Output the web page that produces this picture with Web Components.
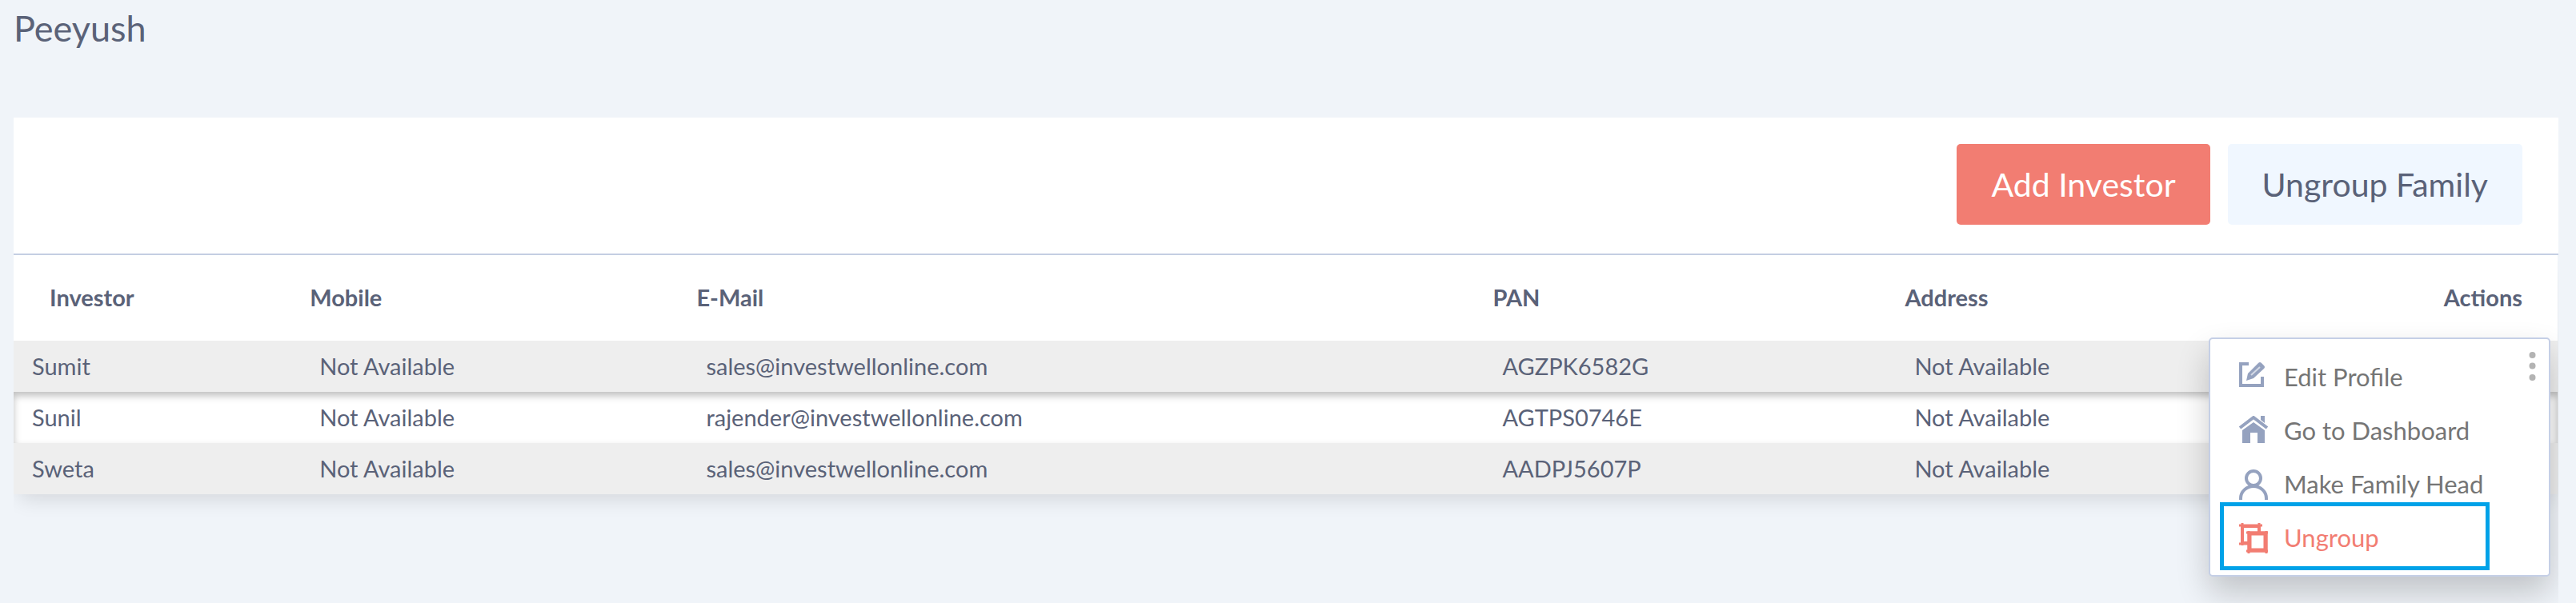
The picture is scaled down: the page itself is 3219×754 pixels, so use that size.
<!DOCTYPE html>
<html lang="en">
<head>
<meta charset="utf-8">
<meta name="viewport" content="width=device-width, initial-scale=1">
<title>Peeyush</title>
<style>
body {
  margin: 0;
  background-color: #f0f4f9;
  color: #5a6278;
  font-family: Lato, "Open Sans", sans-serif;
  font-size: 29px;
}
</style>
</head>
<body>
<family-page heading="Peeyush">
  <action-button slot="actions" kind="primary">Add Investor</action-button>
  <action-button slot="actions">Ungroup Family</action-button>
  <investor-table></investor-table>
</family-page>

<script>
//Page layout: heading, toolbar and the content card
let familyPage = document.createElement("template");

familyPage.innerHTML = `
<style>
:host {
  display: flex;
  flex-direction: column;
  box-sizing: border-box;
  min-height: 100vh;
  padding: 8px 22px 0 17px;
}
h1 {
  margin: 0 0 85px;
  font-size: 45px;
  font-weight: 400;
  line-height: 54px;
}
section {
  display: flex;
  flex-direction: column;
  flex: 1;
}
.toolbar {
  display: flex;
  justify-content: flex-end;
  gap: 22px;
  padding: 33px 45px 36px;
  background-color: #fff;
  border-bottom: 2px solid #c5cfe3;
}
::slotted(investor-table) {
  flex: 1;
}
</style>
<h1></h1>
<section>
  <div class="toolbar"><slot name="actions"></slot></div>
  <slot></slot>
</section>
`;
class FamilyPage extends HTMLElement {
	constructor() {
		super();
		this.attachShadow({ mode: "open" });
		this.shadowRoot.appendChild(familyPage.content.cloneNode(true));
	}

	connectedCallback() {
		this.shadowRoot.querySelector("h1").textContent = this.getAttribute("heading");
	}
}
customElements.define("family-page", FamilyPage);

//Toolbar button
let actionButton = document.createElement("template");

actionButton.innerHTML = `
<style>
:host {
  display: block;
}
button {
  display: block;
  padding: 26px 43px;
  border: 0;
  border-radius: 5px;
  background-color: #f0f7ff;
  color: inherit;
  font-family: inherit;
  font-size: 41px;
  line-height: 49px;
  cursor: pointer;
}
:host([kind="primary"]) button {
  background-color: #f27d72;
  color: #fff;
}
</style>
<button type="button"><slot></slot></button>
`;
class ActionButton extends HTMLElement {
	constructor() {
		super();
		this.attachShadow({ mode: "open" });
		this.shadowRoot.appendChild(actionButton.content.cloneNode(true));
	}
}
customElements.define("action-button", ActionButton);

//Icons used by the row menu
const icons = {
	edit: `<svg width="32" height="31" viewBox="0 0 32 31"><path d="M12 2H2v27h27V18" fill="none" stroke="currentColor" stroke-width="4"/><path d="M9 23l2-9L24 1q2-2 4 0l3 3q2 2 0 4L18 20z" fill="currentColor"/><path d="M15 16L26 6" stroke="#fff" stroke-opacity=".6" stroke-width="2"/></svg>`,
	home: `<svg width="36" height="34" viewBox="0 0 36 34"><path d="M1 15L18 2l17 13" fill="none" stroke="currentColor" stroke-width="4"/><path d="M27 0h5v9l-5-4z" fill="currentColor"/><path d="M4 18L18 8l14 10v16h-9V21h-9v13H4z" fill="currentColor"/></svg>`,
	user: `<svg width="36" height="38" viewBox="0 0 36 38" fill="none" stroke="currentColor" stroke-width="4"><circle cx="18" cy="11" r="9"/><path d="M2 38v-2a16 15 0 0 1 32 0v2"/></svg>`,
	ungroup: `<svg width="36" height="38" viewBox="0 0 36 38" fill="none" stroke="currentColor"><path d="M25 11V4H4v21h8" stroke-width="4"/><path d="M0 3h29M4 0v28M25 0v11M0 26h12" stroke-width="3"/><path d="M13 13h20v21H13z" stroke-width="5"/><path d="M9 12h27M9 35h27M12 10v28M34 10v28" stroke-width="3"/></svg>`
};

//Entry of the row menu
let menuItem = document.createElement("template");

menuItem.innerHTML = `
<style>
:host {
  display: block;
  height: 36px;
}
button {
  display: flex;
  align-items: flex-start;
  gap: 20px;
  padding: 0;
  border: 0;
  background: none;
  color: #757575;
  font-family: inherit;
  font-size: 31px;
  line-height: 36px;
  white-space: nowrap;
  cursor: pointer;
}
.icon {
  display: flex;
  width: 36px;
  color: #95a2bf;
}
:host([active]) button,
:host([active]) .icon {
  color: #f27d72;
}
</style>
<button type="button"><span class="icon"></span><slot></slot></button>
`;
class MenuItem extends HTMLElement {
	constructor() {
		super();
		this.attachShadow({ mode: "open" });
		this.shadowRoot.appendChild(menuItem.content.cloneNode(true));
	}

	connectedCallback() {
		this.shadowRoot.querySelector(".icon").innerHTML = icons[this.getAttribute("icon")];
	}
}
customElements.define("menu-item", MenuItem);

//Three dots button with its menu
let rowMenu = document.createElement("template");

rowMenu.innerHTML = `
<style>
:host {
  display: flex;
  justify-content: flex-end;
}
.dots {
  display: flex;
  padding: 0;
  border: 0;
  background: none;
  color: #b3b3b3;
  cursor: pointer;
}
:host([open]) .dots {
  position: relative;
  z-index: 2;
}
.menu {
  display: none;
}
:host([open]) .menu {
  position: absolute;
  z-index: 1;
  top: -4px;
  right: 9px;
  box-sizing: border-box;
  width: 427px;
  display: flex;
  flex-direction: column;
  gap: 31px;
  padding: 29px 36px;
  border: 2px solid #c5cfe6;
  border-radius: 5px;
  background-color: #fff;
  box-shadow: 0 20px 40px rgba(0, 0, 0, 0.2);
}
.marker {
  position: absolute;
  left: 12px;
  right: 74px;
  bottom: 6px;
  height: 75px;
  border: 5px solid #00a2e8;
  pointer-events: none;
}
</style>
<button class="dots" type="button" aria-label="Actions">
  <svg width="9" height="36" viewBox="0 0 18 72" fill="currentColor"><circle cx="9" cy="8" r="8"/><circle cx="9" cy="35" r="8"/><circle cx="9" cy="64" r="8"/></svg>
</button>
<div class="menu">
  <menu-item icon="edit">Edit Profile</menu-item>
  <menu-item icon="home">Go to Dashboard</menu-item>
  <menu-item icon="user">Make Family Head</menu-item>
  <menu-item icon="ungroup" active>Ungroup</menu-item>
  <div class="marker"></div>
</div>
`;
class RowMenu extends HTMLElement {
	constructor() {
		super();
		this.attachShadow({ mode: "open" });
		this.shadowRoot.appendChild(rowMenu.content.cloneNode(true));
		this.shadowRoot.querySelector(".dots").addEventListener("click", () => {
			this.toggleAttribute("open");
		});
	}
}
customElements.define("row-menu", RowMenu);

//Investor table
const investors = [
	["Sumit", "Not Available", "sales@investwellonline.com", "AGZPK6582G", "Not Available"],
	["Sunil", "Not Available", "rajender@investwellonline.com", "AGTPS0746E", "Not Available"],
	["Sweta", "Not Available", "sales@investwellonline.com", "AADPJ5607P", "Not Available"]
];

let investorTable = document.createElement("template");

investorTable.innerHTML = `
<style>
:host {
  display: block;
  padding-right: 1px;
  overflow-x: clip;
  overflow-y: visible;
}
table {
  width: 100%;
  table-layout: fixed;
  border-collapse: collapse;
  background-color: #fff;
  box-shadow: 0 14px 24px -8px rgba(0, 0, 0, 0.12);
  line-height: 34px;
  text-align: left;
}
.investor { width: 11.3%; }
.mobile { width: 15.2%; }
.email { width: 31.3%; }
.pan { width: 16.2%; }
th {
  padding: 36px 11px 37px;
  font-weight: 700;
}
th:first-child {
  padding-left: 45px;
}
th:last-child {
  padding-right: 44px;
  text-align: right;
}
td {
  padding: 15px 23px;
}
td:last-child {
  position: relative;
  padding: 0 27px;
}
tbody tr:nth-child(odd) {
  background-color: #eee;
}
tbody tr:nth-child(even) {
  box-shadow: inset 0 5px 10px rgba(0, 0, 0, 0.25);
}
</style>
<table>
  <colgroup><col class="investor"><col class="mobile"><col class="email"><col class="pan"><col><col></colgroup>
  <thead>
    <tr><th>Investor</th><th>Mobile</th><th>E-Mail</th><th>PAN</th><th>Address</th><th>Actions</th></tr>
  </thead>
  <tbody></tbody>
</table>
`;
class InvestorTable extends HTMLElement {
	constructor() {
		super();
		this.attachShadow({ mode: "open" });
		this.shadowRoot.appendChild(investorTable.content.cloneNode(true));
	}

	connectedCallback() {
		const body = this.shadowRoot.querySelector("tbody");
		body.innerHTML = investors.map((row, i) => `
			<tr>${row.map(cell => `<td>${cell}</td>`).join("")}<td><row-menu ${i === 0 ? "open" : ""}></row-menu></td></tr>
		`).join("");
	}
}
customElements.define("investor-table", InvestorTable);
</script>
</body>
</html>
